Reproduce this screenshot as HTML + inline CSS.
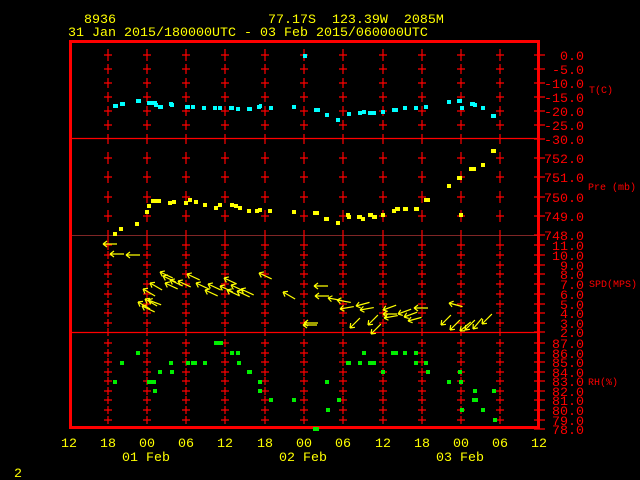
<!DOCTYPE html>
<html><head><meta charset="utf-8"><style>
html,body{margin:0;padding:0;background:#000;width:640px;height:480px;overflow:hidden}
svg{display:block}
text{font-family:"Liberation Mono",monospace}
</style></head><body>
<svg width="640" height="480" xmlns="http://www.w3.org/2000/svg">
<defs>
<g id="col" stroke="#f00" stroke-width="1.2" fill="none">
<path d="M-4,55h8M0,49v12M-4,69h8M0,64v10M-4,83h8M0,78v10M-4,97h8M0,92v10M-4,111h8M0,106v10M-4,125h8M0,120v10M0,134v10
M-4,158h8M0,152v12M-4,177h8M0,171v12M-4,197h8M0,191v12M-4,216h8M0,210v12M0,230v10
M-4,245h8M0,240v10M-4,255h8M0,251v8M-4,265h8M0,261v8M-4,274h8M0,270v8M-4,284h8M0,280v8M-4,294h8M0,290v8M-4,304h8M0,300v8M-4,313h8M0,309v8M-4,323h8M0,319v8M0,328v8
M-4,343h8M0,339v8M-4,353h8M0,349v8M-4,362h8M0,358v8M-4,372h8M0,368v8M-4,381h8M0,377v8M-4,391h8M0,387v8M-4,400h8M0,396v8M-4,410h8M0,406v8M-4,420h8M0,416v8"/>
</g>
<path id="a" d="M0,0L14,0M0,0L4,-3M0,0L4,3" stroke="#ff0" stroke-width="1.2" fill="none"/>
</defs>
<text fill="#ff0" font-size="13.33" xml:space="preserve"><tspan x="68" y="23">  8936                   77.17S  123.39W  2085M</tspan><tspan x="68" y="36">31 Jan 2015/180000UTC - 03 Feb 2015/060000UTC</tspan></text>
<g stroke="#f00" fill="none">
<rect x="70.5" y="41.5" width="468" height="386" stroke-width="3"/>
<path d="M72,138.5H538M72,332.5H538" stroke-width="1.3"/>
<path d="M72,235.5H538" stroke-width="0.8" stroke="#a33"/>
</g>
<use href="#col" x="108"/><use href="#col" x="147"/><use href="#col" x="186"/><use href="#col" x="225"/><use href="#col" x="265"/><use href="#col" x="304"/><use href="#col" x="343"/><use href="#col" x="383"/><use href="#col" x="422"/><use href="#col" x="461"/><use href="#col" x="500"/>
<path stroke="#f00" stroke-width="1.3" d="M534,55h11M534,69h11M534,83h11M534,97h11M534,111h11M534,125h11M534,139h11M534,158h11M534,177h11M534,197h11M534,216h11M534,235h11M534,245h11M534,255h11M534,265h11M534,274h11M534,284h11M534,294h11M534,304h11M534,313h11M534,323h11M534,332h11M534,343h11M534,353h11M534,362h11M534,372h11M534,381h11M534,391h11M534,400h11M534,410h11M534,420h11M534,429h11"/>
<g fill="#f00" font-size="13.33" text-anchor="end">
<text x="584" y="60">0.0</text><text x="584" y="74">-5.0</text><text x="584" y="88">-10.0</text><text x="584" y="102">-15.0</text><text x="584" y="116">-20.0</text><text x="584" y="130">-25.0</text><text x="584" y="144">-30.0</text>
<text x="584" y="163">752.0</text><text x="584" y="182">751.0</text><text x="584" y="202">750.0</text><text x="584" y="221">749.0</text><text x="584" y="240">748.0</text>
<text x="584" y="250">11.0</text><text x="584" y="260">10.0</text><text x="584" y="270">9.0</text><text x="584" y="279">8.0</text><text x="584" y="289">7.0</text><text x="584" y="299">6.0</text><text x="584" y="309">5.0</text><text x="584" y="318">4.0</text><text x="584" y="328">3.0</text><text x="584" y="337">2.0</text>
<text x="584" y="348">87.0</text><text x="584" y="358">86.0</text><text x="584" y="367">85.0</text><text x="584" y="377">84.0</text><text x="584" y="386">83.0</text><text x="584" y="396">82.0</text><text x="584" y="405">81.0</text><text x="584" y="415">80.0</text><text x="584" y="425">79.0</text><text x="584" y="434">78.0</text>
</g>
<g fill="#f00" font-size="10">
<text x="589" y="93">T(C)</text><text x="588" y="190">Pre (mb)</text><text x="589" y="287">SPD(MPS)</text><text x="588" y="385">RH(%)</text>
</g>
<g fill="#ff0" font-size="13.33" text-anchor="middle">
<text x="69" y="447">12</text><text x="108" y="447">18</text><text x="147" y="447">00</text><text x="186" y="447">06</text><text x="225" y="447">12</text><text x="265" y="447">18</text><text x="304" y="447">00</text><text x="343" y="447">06</text><text x="383" y="447">12</text><text x="422" y="447">18</text><text x="461" y="447">00</text><text x="500" y="447">06</text><text x="539" y="447">12</text>
<text x="146" y="461">01 Feb</text><text x="303" y="461">02 Feb</text><text x="460" y="461">03 Feb</text>
<text x="18" y="477">2</text>
</g>
<g fill="#0ff">
<rect x="113" y="104" width="5" height="4"/><rect x="120" y="102" width="5" height="4"/><rect x="136" y="99" width="5" height="4"/><rect x="147" y="101" width="7" height="4"/><rect x="153" y="101" width="4" height="4"/><rect x="154" y="103" width="4" height="4"/><rect x="158" y="105" width="5" height="4"/><rect x="169" y="102" width="4" height="4"/><rect x="170" y="103" width="4" height="4"/><rect x="185" y="105" width="5" height="4"/><rect x="191" y="105" width="4" height="4"/><rect x="202" y="106" width="4" height="4"/><rect x="213" y="106" width="4" height="4"/><rect x="218" y="106" width="4" height="4"/><rect x="229" y="106" width="5" height="4"/><rect x="236" y="107" width="4" height="4"/><rect x="247" y="107" width="5" height="4"/><rect x="257" y="105" width="4" height="4"/><rect x="259" y="104" width="3" height="4"/><rect x="269" y="106" width="4" height="4"/><rect x="292" y="105" width="4" height="4"/><rect x="303" y="54" width="4" height="4"/><rect x="314" y="108" width="6" height="4"/><rect x="325" y="113" width="4" height="4"/><rect x="336" y="118" width="4" height="4"/><rect x="347" y="112" width="4" height="4"/><rect x="358" y="111" width="4" height="4"/><rect x="362" y="110" width="4" height="4"/><rect x="368" y="111" width="8" height="4"/><rect x="381" y="110" width="4" height="4"/><rect x="392" y="108" width="6" height="4"/><rect x="403" y="106" width="4" height="4"/><rect x="414" y="106" width="4" height="4"/><rect x="424" y="105" width="4" height="4"/><rect x="447" y="100" width="4" height="4"/><rect x="457" y="99" width="5" height="4"/><rect x="460" y="106" width="4" height="4"/><rect x="470" y="102" width="5" height="4"/><rect x="473" y="103" width="4" height="4"/><rect x="481" y="106" width="4" height="4"/><rect x="491" y="114" width="5" height="4"/>
</g>
<g fill="#ff0">
<rect x="113" y="232" width="4" height="4"/><rect x="119" y="227" width="4" height="4"/><rect x="135" y="222" width="4" height="4"/><rect x="145" y="210" width="4" height="4"/><rect x="147" y="204" width="4" height="4"/><rect x="151" y="199" width="6" height="4"/><rect x="157" y="199" width="4" height="4"/><rect x="168" y="201" width="4" height="4"/><rect x="172" y="200" width="4" height="4"/><rect x="184" y="201" width="4" height="4"/><rect x="188" y="198" width="4" height="4"/><rect x="194" y="200" width="4" height="4"/><rect x="203" y="203" width="4" height="4"/><rect x="214" y="206" width="4" height="4"/><rect x="218" y="203" width="4" height="4"/><rect x="230" y="203" width="4" height="4"/><rect x="234" y="204" width="4" height="4"/><rect x="238" y="206" width="4" height="4"/><rect x="247" y="209" width="4" height="4"/><rect x="255" y="209" width="4" height="4"/><rect x="258" y="208" width="4" height="4"/><rect x="268" y="209" width="4" height="4"/><rect x="292" y="210" width="4" height="4"/><rect x="313" y="211" width="6" height="4"/><rect x="324" y="217" width="5" height="4"/><rect x="336" y="221" width="4" height="4"/><rect x="346" y="213" width="4" height="4"/><rect x="347" y="215" width="4" height="4"/><rect x="357" y="215" width="5" height="4"/><rect x="361" y="217" width="4" height="4"/><rect x="368" y="213" width="5" height="4"/><rect x="372" y="215" width="5" height="4"/><rect x="381" y="213" width="4" height="4"/><rect x="392" y="209" width="4" height="4"/><rect x="395" y="207" width="5" height="4"/><rect x="403" y="207" width="5" height="4"/><rect x="414" y="207" width="5" height="4"/><rect x="424" y="198" width="6" height="4"/><rect x="447" y="184" width="4" height="4"/><rect x="457" y="176" width="5" height="4"/><rect x="469" y="167" width="4" height="4"/><rect x="471" y="167" width="5" height="4"/><rect x="481" y="163" width="4" height="4"/><rect x="491" y="149" width="5" height="4"/><rect x="459" y="213" width="4" height="4"/>
</g>
<g fill="#0e0">
<rect x="113" y="380" width="4" height="4"/><rect x="120" y="361" width="4" height="4"/><rect x="136" y="351" width="4" height="4"/><rect x="147" y="380" width="9" height="4"/><rect x="153" y="389" width="4" height="4"/><rect x="158" y="370" width="4" height="4"/><rect x="169" y="361" width="4" height="4"/><rect x="170" y="370" width="4" height="4"/><rect x="186" y="361" width="4" height="4"/><rect x="191" y="361" width="6" height="4"/><rect x="203" y="361" width="4" height="4"/><rect x="214" y="341" width="9" height="4"/><rect x="230" y="351" width="4" height="4"/><rect x="236" y="351" width="4" height="4"/><rect x="237" y="361" width="4" height="4"/><rect x="247" y="370" width="5" height="4"/><rect x="258" y="380" width="4" height="4"/><rect x="258" y="389" width="4" height="4"/><rect x="269" y="398" width="4" height="4"/><rect x="292" y="398" width="4" height="4"/><rect x="313" y="427" width="6" height="4"/><rect x="325" y="380" width="4" height="4"/><rect x="326" y="408" width="4" height="4"/><rect x="337" y="398" width="4" height="4"/><rect x="346" y="361" width="5" height="4"/><rect x="358" y="361" width="4" height="4"/><rect x="362" y="351" width="4" height="4"/><rect x="368" y="361" width="8" height="4"/><rect x="381" y="370" width="4" height="4"/><rect x="391" y="351" width="7" height="4"/><rect x="403" y="351" width="4" height="4"/><rect x="414" y="351" width="4" height="4"/><rect x="414" y="361" width="4" height="4"/><rect x="424" y="361" width="4" height="4"/><rect x="426" y="370" width="4" height="4"/><rect x="447" y="380" width="4" height="4"/><rect x="458" y="370" width="4" height="4"/><rect x="459" y="380" width="4" height="4"/><rect x="460" y="408" width="4" height="4"/><rect x="473" y="389" width="4" height="4"/><rect x="472" y="398" width="6" height="4"/><rect x="481" y="408" width="4" height="4"/><rect x="492" y="389" width="4" height="4"/><rect x="493" y="418" width="4" height="4"/>
</g>
<g>
<use href="#a" transform="translate(103,244)"/><use href="#a" transform="translate(110,254)"/><use href="#a" transform="translate(126,255)"/>
<use href="#a" transform="translate(160,272) rotate(25)"/><use href="#a" transform="translate(165,283) rotate(25)"/><use href="#a" transform="translate(150,283) rotate(30)"/><use href="#a" transform="translate(143,289) rotate(30)"/><use href="#a" transform="translate(145,299) rotate(30)"/><use href="#a" transform="translate(138,302) rotate(30)"/><use href="#a" transform="translate(142,306) rotate(25)"/><use href="#a" transform="translate(148,300) rotate(20)"/>
<use href="#a" transform="translate(163,276) rotate(25)"/><use href="#a" transform="translate(170,280) rotate(25)"/><use href="#a" transform="translate(178,281) rotate(25)"/><use href="#a" transform="translate(187,274) rotate(25)"/><use href="#a" transform="translate(196,283) rotate(25)"/><use href="#a" transform="translate(205,290) rotate(25)"/><use href="#a" transform="translate(208,284) rotate(25)"/><use href="#a" transform="translate(220,286) rotate(25)"/><use href="#a" transform="translate(224,278) rotate(25)"/><use href="#a" transform="translate(227,290) rotate(25)"/><use href="#a" transform="translate(231,285) rotate(25)"/><use href="#a" transform="translate(237,291) rotate(25)"/><use href="#a" transform="translate(241,289) rotate(25)"/><use href="#a" transform="translate(259,273) rotate(25)"/><use href="#a" transform="translate(283,292) rotate(30)"/>
<use href="#a" transform="translate(314,286)"/><use href="#a" transform="translate(315,296)"/><use href="#a" transform="translate(328,298) rotate(10)"/><use href="#a" transform="translate(337,300) rotate(10)"/><use href="#a" transform="translate(340,309) rotate(-10)"/><use href="#a" transform="translate(356,306) rotate(-15)"/><use href="#a" transform="translate(360,310) rotate(-10)"/><use href="#a" transform="translate(383,310) rotate(-20)"/><use href="#a" transform="translate(383,314)"/><use href="#a" transform="translate(384,318) rotate(-10)"/><use href="#a" transform="translate(398,314) rotate(-20)"/><use href="#a" transform="translate(404,317) rotate(-20)"/><use href="#a" transform="translate(408,321) rotate(-15)"/><use href="#a" transform="translate(414,308)"/><use href="#a" transform="translate(449,303) rotate(15)"/><use href="#a" transform="translate(304,323)"/><use href="#a" transform="translate(303,325)"/>
<use href="#a" transform="translate(350,328) rotate(-45)"/><use href="#a" transform="translate(368,325) rotate(-45)"/><use href="#a" transform="translate(371,334) rotate(-45)"/><use href="#a" transform="translate(441,325) rotate(-45)"/><use href="#a" transform="translate(450,330) rotate(-45)"/><use href="#a" transform="translate(460,331) rotate(-40)"/><use href="#a" transform="translate(465,330) rotate(-45)"/><use href="#a" transform="translate(473,329) rotate(-50)"/><use href="#a" transform="translate(482,324) rotate(-45)"/>
</g>
</svg>
</body></html>
